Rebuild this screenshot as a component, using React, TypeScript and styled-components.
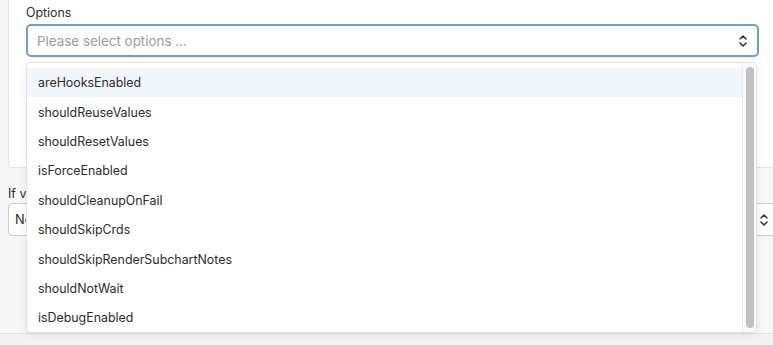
import styled, { createGlobalStyle } from "styled-components";

const GlobalStyle = createGlobalStyle`
  html, body {
    margin: 0;
    padding: 0;
    background: #f7f7f7;
    overflow: hidden;
  }
  body {
    font-family: Inter, "Liberation Sans", sans-serif;
    font-size: 12.4px;
    color: #2b2b2b;
  }
`;

const Page = styled.div`
  height: 345px;
  display: flex;
  flex-direction: column;
  overflow: hidden;
`;

const Content = styled.div`
  flex: 1;
  width: 770px;
  padding-left: 8px;
  display: flex;
  flex-direction: column;
`;

const Card = styled.div`
  margin-top: -12px;
  background: #fff;
  border: 1px solid #e3e3e3;
  border-radius: 4px;
  padding: 16px 18px 0 17px;
  height: 180px;
  box-sizing: border-box;
`;

const Label = styled.div`
  font-size: 12.4px;
  line-height: 16px;
  color: #2b2b2b;
  margin-bottom: 3px;
`;

const SelectWrap = styled.div`
  position: relative;
`;

const Input = styled.div`
  height: 33px;
  box-sizing: border-box;
  border: 2px solid #6a9fd8;
  border-radius: 5px;
  background: #fff;
  display: flex;
  align-items: center;
  justify-content: space-between;
  padding: 0 9px 0 9px;
`;

const Placeholder = styled.span`
  color: #9b9b9b;
  font-size: 13.4px;
`;

const Menu = styled.div`
  position: absolute;
  top: 38px;
  left: 0;
  right: 2px;
  height: 271px;
  box-sizing: border-box;
  background: #fff;
  border: 1px solid #e2e2e2;
  border-radius: 5px;
  box-shadow: 0 2px 8px rgba(0, 0, 0, 0.08);
  display: flex;
  overflow: hidden;
  z-index: 5;
`;

const OptionList = styled.ul`
  flex: 1;
  list-style: none;
  margin: 0;
  padding: 5px 0 0 0;
`;

const Option = styled.li<{ $active?: boolean }>`
  height: 29.4px;
  display: flex;
  align-items: center;
  padding-left: 11px;
  background: ${(p) => (p.$active ? "#f1f6fb" : "transparent")};
  color: #2b2b2b;
  font-size: 12.4px;
`;

const ScrollTrack = styled.div`
  width: 14px;
  border-left: 1px solid #ebebeb;
  background: #fafafa;
  padding: 4px 2px 4px 3px;
  box-sizing: border-box;
  display: flex;
`;

const ScrollThumb = styled.div`
  flex: 1;
  background: #c1c1c1;
  border-radius: 4px;
`;

const Below = styled.div`
  margin-top: 18px;
`;

const LowerLabel = styled.div`
  font-size: 12.4px;
  line-height: 16px;
  color: #2b2b2b;
  margin-bottom: 1px;
`;

const LowerSelect = styled.div`
  height: 33px;
  box-sizing: border-box;
  border: 1px solid #c4ccd6;
  border-radius: 4px;
  background: #fdfdfd;
  display: flex;
  align-items: center;
  justify-content: space-between;
  padding: 0 8px 0 6px;
  font-size: 12.8px;
`;

const Footer = styled.div`
  height: 11px;
  border-top: 1px solid #e2e2e2;
  background: #f3f3f3;
`;

const UpDown = () => (
  <svg width="10" height="14" viewBox="0 0 10 14" fill="none">
    <path
      d="M2 5 L5 2 L8 5 M2 9 L5 12 L8 9"
      stroke="#333"
      strokeWidth="1.5"
      strokeLinecap="round"
      strokeLinejoin="round"
    />
  </svg>
);

const options = [
  "areHooksEnabled",
  "shouldReuseValues",
  "shouldResetValues",
  "isForceEnabled",
  "shouldCleanupOnFail",
  "shouldSkipCrds",
  "shouldSkipRenderSubchartNotes",
  "shouldNotWait",
  "isDebugEnabled",
];

const App = () => (
  <Page>
    <GlobalStyle />
    <Content>
      <Card>
        <Label>Options</Label>
        <SelectWrap>
          <Input>
            <Placeholder>Please select options ...</Placeholder>
            <UpDown />
          </Input>
          <Menu>
            <OptionList>
              {options.map((o, i) => (
                <Option key={o} $active={i === 0}>
                  {o}
                </Option>
              ))}
            </OptionList>
            <ScrollTrack>
              <ScrollThumb />
            </ScrollTrack>
          </Menu>
        </SelectWrap>
      </Card>
      <Below>
        <LowerLabel>If values already exist</LowerLabel>
        <LowerSelect>
          <span>None</span>
          <UpDown />
        </LowerSelect>
      </Below>
    </Content>
    <Footer />
  </Page>
);

export default App;
